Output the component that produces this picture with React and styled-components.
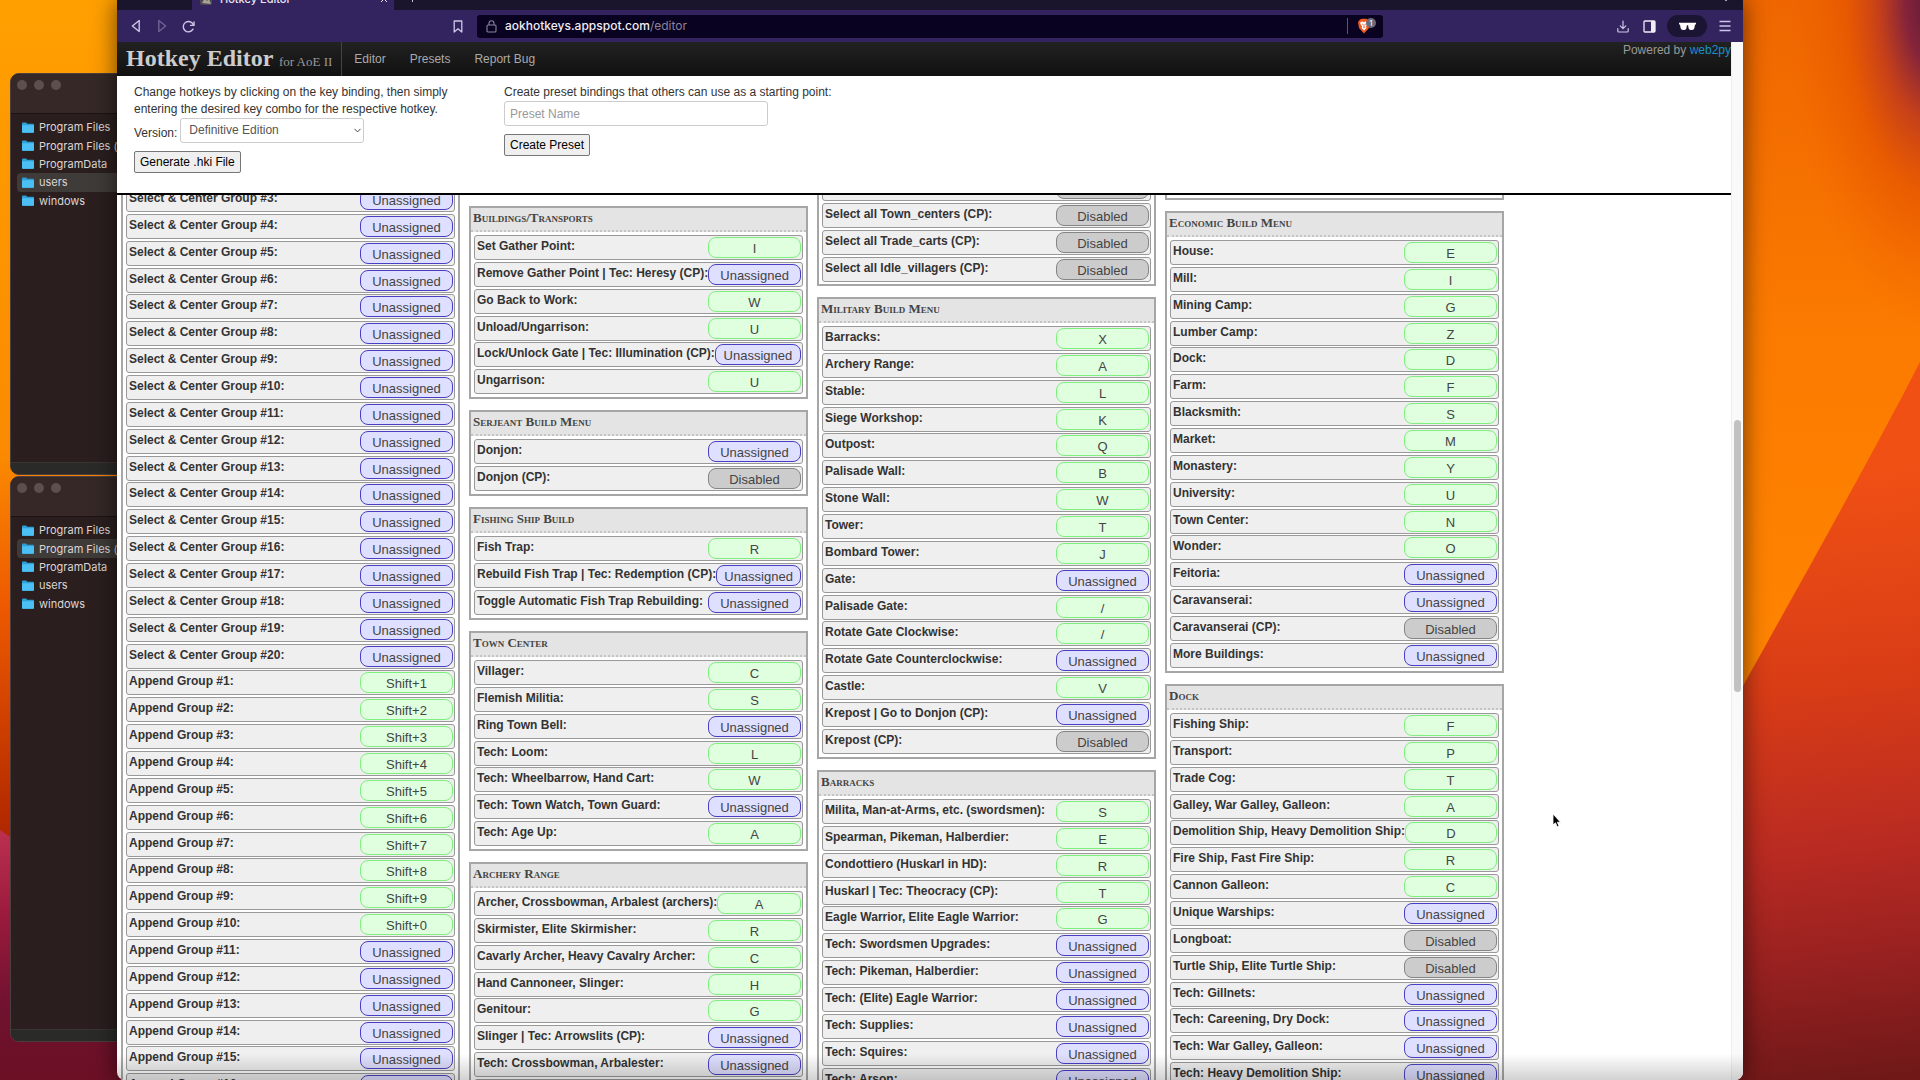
import React from "react";
import styled, { createGlobalStyle } from "styled-components";
import { LuChevronDown } from "react-icons/lu";

const GlobalStyle = createGlobalStyle`
  * {
    box-sizing: border-box;
  }

  body {
    margin: 0;
    font: 12px/17px "Liberation Sans", Arial, sans-serif;
    color: #333;
  }

  button, input, select {
    font: inherit;
  }
`;

const Desktop = styled.div`
  position: relative;
  height: 100vh;
  overflow: hidden;
  background: #f07000;
`;

const WallpaperArt = styled.svg`
  position: absolute;
  inset: 0;
  width: 100%;
  height: 100%;
`;

/* Finder windows */

const Finder = styled.section`
  position: absolute;
  left: 10px;
  top: ${(p) => p.$top}px;
  width: 240px;
  height: ${(p) => p.$height}px;
  display: flex;
  flex-direction: column;
  border: 1px solid #4a3f3e;
  border-radius: 9px;
  background: #2a1f1e;
  overflow: hidden;
`;

const FinderBar = styled.div`
  display: flex;
  gap: 7px;
  height: 40px;
  padding: 6px;
  border-bottom: 1px solid #1c1212;
  background: #352826;
`;

const Light = styled.span`
  width: 10px;
  height: 10px;
  border-radius: 50%;
  background: #5c504f;
`;

const FolderList = styled.ul`
  display: grid;
  grid-template-rows: repeat(5, 1fr);
  height: 92px;
  margin: 4px 0 auto;
  padding: 0 0 0 6px;
  list-style: none;
`;

const FolderItem = styled.li`
  display: flex;
  align-items: center;
  gap: 5px;
  padding-left: 5px;
  border-radius: 4px;
  background: ${(p) => (p.$active ? "#3f3b39" : "none")};
  color: #ddd5d4;
  font: 11px/18px Inter, sans-serif;
  white-space: nowrap;
`;

const FinderFoot = styled.div`
  height: 12px;
  border-top: 1px solid #3a3433;
  background: #2a2a29;
`;

/* Browser chrome */

const Browser = styled.main`
  position: relative;
  display: flex;
  flex-direction: column;
  height: 100vh;
  margin: 0 177px 0 117px;
  border-radius: 0 0 8px 8px;
  background: #fff;
  box-shadow: 0 0 24px rgba(0, 0, 0, 0.6);
  overflow: hidden;

  &::after {
    content: "";
    position: absolute;
    inset: auto 0 0;
    height: 26px;
    background: linear-gradient(transparent, rgba(0, 0, 0, 0.18));
    pointer-events: none;
  }
`;

const TabStrip = styled.div`
  display: flex;
  flex: none;
  align-items: flex-end;
  height: 10px;
  padding: 0 16px 0 75px;
  background: #1a152d;
  overflow: hidden;
`;

const Tab = styled.div`
  display: flex;
  align-items: center;
  gap: 8px;
  width: 202px;
  height: 28px;
  padding: 5px 6px 0 8px;
  background: #33245f;
  color: #e9e6f2;
  font: 500 11px/16px Inter, sans-serif;

  svg:last-child {
    margin-left: auto;
  }
`;

const NewTab = styled.div`
  width: 1px;
  height: 8px;
  margin: 0 auto 8px 18px;
  background: #c9c5d8;
`;

const TabMenu = styled.div`
  width: 2px;
  height: 2px;
  margin-bottom: 9px;
  background: #a9a4bc;
`;

const Toolbar = styled.div`
  display: flex;
  flex: none;
  align-items: center;
  height: 32px;
  padding: 0 5px 0 6px;
  background: #33245f;
`;

const ToolButton = styled.button`
  display: flex;
  flex: none;
  align-items: center;
  justify-content: center;
  width: 26px;
  height: 22px;
  padding: 0;
  border: 0;
  border-radius: 11px;
  background: none;
  color: ${(p) => (p.$dim ? "#6f6493" : "#cdc6e6")};
`;

const BookmarkButton = styled(ToolButton)`
  margin-left: 244px;
`;

const PrivateButton = styled(ToolButton)`
  width: 40px;
  margin: 0 5px;
  background: #1c1433;
  color: #fff;
`;

const AddressBar = styled.div`
  display: flex;
  flex: 0 1 906px;
  align-items: center;
  height: 23px;
  margin: 0 auto 0 6px;
  padding: 0 4px 0 9px;
  border-radius: 3px;
  background: #090220;
  color: #8a839f;
  font: 12px/16px Inter, sans-serif;

  b {
    margin-left: 8px;
    color: #efedf6;
    font-weight: 500;
  }
`;

const Shield = styled.div`
  display: flex;
  margin-left: auto;
  padding-left: 9px;
  border-left: 1px solid #5b5472;
`;

const Viewport = styled.div`
  display: flex;
  flex: 1;
  min-height: 0;
`;

const Page = styled.div`
  display: flex;
  flex: 1;
  flex-direction: column;
  min-width: 0;
`;

const Scrollbar = styled.div`
  width: 12px;
  padding: 378px 2px 0;
  border-left: 1px solid #eeeef0;
  background: #f9f9fa;
`;

const Thumb = styled.div`
  width: 7px;
  height: 272px;
  border-radius: 4px;
  background: #c1c1c1;
`;

/* Site header */

const NavBar = styled.nav`
  display: flex;
  flex: none;
  height: 34px;
  padding-left: 9px;
  background: linear-gradient(#222, #111);
  color: #999;
`;

const Brand = styled.a`
  padding-right: 9px;
  border-right: 1px solid #444;
  color: #ccc;
  font: bold 24px/33px "Liberation Serif", serif;
  text-decoration: none;

  small {
    color: #999;
    font-size: 13px;
    font-weight: normal;
  }
`;

const NavLink = styled.a`
  padding: 0 12px;
  color: #aaa;
  line-height: 34px;
  text-decoration: none;
`;

const Powered = styled.span`
  margin-left: auto;

  a {
    color: #1a8fc9;
    text-decoration: none;
  }
`;

const Settings = styled.header`
  display: flex;
  flex: none;
  gap: 52px;
  height: 119px;
  padding: 8px 17px 0;
  border-bottom: 2px solid #000;
`;

const SettingsColumn = styled.div`
  width: 318px;
  white-space: nowrap;

  p {
    margin: 0;
  }
`;

const VersionRow = styled.div`
  display: flex;
  align-items: center;
  gap: 3px;

  label {
    padding-top: 5px;
  }
`;

const SelectBox = styled.div`
  position: relative;

  svg {
    position: absolute;
    top: 7px;
    right: 1px;
    pointer-events: none;
  }
`;

const Select = styled.select`
  display: block;
  width: 184px;
  height: 25px;
  padding: 0 8px;
  border: 1px solid #ccc;
  border-radius: 3px;
  background: #fff;
  color: #555;
  appearance: none;
`;

const Input = styled.input`
  display: block;
  width: 264px;
  height: 25px;
  padding: 0 5px;
  border: 1px solid #ccc;
  border-radius: 3px;
  color: #555;

  &::placeholder {
    color: #999;
  }
`;

const Button = styled.button`
  height: 22px;
  margin-top: 8px;
  padding: 0 5px;
  border: 1px solid #767676;
  border-radius: 2px;
  background: #efefef;
  color: #000;
`;

/* Hotkey groups */

const Columns = styled.div`
  display: flex;
  flex: 1;
  align-items: flex-start;
  gap: 9px;
  min-height: 0;
  padding-left: 4px;
  overflow: hidden;
`;

const Column = styled.div`
  display: flex;
  flex: 0 0 339px;
  flex-direction: column;
  gap: 11px;
  min-width: 0;
  margin-top: ${(p) => p.$shift}px;
`;

const Group = styled.section`
  min-height: 5px;
  padding-bottom: 1px;
  border: 2px solid #a6a6a6;
  border-top-width: ${(p) => (p.$open ? 0 : 2)}px;
  background: #fff;
`;

const GroupTitle = styled.h2`
  height: 24px;
  margin: 0 0 3px;
  padding-left: 2px;
  border-bottom: 2px dotted #c4c4c4;
  background: #e4e4e4;
  color: #444;
  font: bold small-caps 13px/20px "Liberation Serif", serif;
`;

const Row = styled.div`
  display: flex;
  align-items: center;
  height: 25px;
  margin: 0 3px 2px;
  padding: 0 1px 0 2px;
  border: 1px solid #999;
  border-radius: 3px;
  background: #efefef;

  &:nth-of-type(7n + 4) {
    margin-bottom: 1px;
  }
`;

const RowLabel = styled.label`
  flex: none;
  padding-bottom: 2px;
  font-weight: bold;
  white-space: nowrap;
`;

const tones = {
  bound: { line: "#7df07d", fill: "#dfffdf" },
  Unassigned: { line: "#4a3fc4", fill: "#dfdfff" },
  Disabled: { line: "#858585", fill: "#cccccc" },
};

// gives up a few pixels when the label beside it is long
const KeyButton = styled.button`
  flex: 0 1 93px;
  min-width: 0;
  height: 21px;
  margin-left: auto;
  padding: 1px 0 0;
  border: 1px solid ${(p) => p.$tone.line};
  border-radius: 8px;
  background: ${(p) => p.$tone.fill};
  color: #444;
  font-size: 13px;
`;

const Cursor = styled.svg`
  position: absolute;
  left: 1552px;
  top: 813px;
`;

const folders = ["Program Files", "Program Files (x86)", "ProgramData", "users", "windows"];

const U = "Unassigned";
const D = "Disabled";

const selectRows = Array.from({ length: 18 }, (_, i) => [`Select & Center Group #${i + 3}:`, U]);
const appendRows = Array.from({ length: 16 }, (_, i) => [
  `Append Group #${i + 1}:`,
  i < 10 ? `Shift+${(i + 1) % 10}` : U,
]);

const columns = [
  {
    shift: -8,
    groups: [{ rows: [...selectRows, ...appendRows] }],
  },
  {
    shift: 11,
    groups: [
      {
        title: "Buildings/Transports",
        rows: [
          ["Set Gather Point:", "I"],
          ["Remove Gather Point | Tec: Heresy (CP):", U],
          ["Go Back to Work:", "W"],
          ["Unload/Ungarrison:", "U"],
          ["Lock/Unlock Gate | Tec: Illumination (CP):", U],
          ["Ungarrison:", "U"],
        ],
      },
      {
        title: "Serjeant Build Menu",
        rows: [
          ["Donjon:", U],
          ["Donjon (CP):", D],
        ],
      },
      {
        title: "Fishing Ship Build",
        rows: [
          ["Fish Trap:", "R"],
          ["Rebuild Fish Trap | Tec: Redemption (CP):", U],
          ["Toggle Automatic Fish Trap Rebuilding:", U],
        ],
      },
      {
        title: "Town Center",
        rows: [
          ["Villager:", "C"],
          ["Flemish Militia:", "S"],
          ["Ring Town Bell:", U],
          ["Tech: Loom:", "L"],
          ["Tech: Wheelbarrow, Hand Cart:", "W"],
          ["Tech: Town Watch, Town Guard:", U],
          ["Tech: Age Up:", "A"],
        ],
      },
      {
        title: "Archery Range",
        rows: [
          ["Archer, Crossbowman, Arbalest (archers):", "A"],
          ["Skirmister, Elite Skirmisher:", "R"],
          ["Cavarly Archer, Heavy Cavalry Archer:", "C"],
          ["Hand Cannoneer, Slinger:", "H"],
          ["Genitour:", "G"],
          ["Slinger | Tec: Arrowslits (CP):", U],
          ["Tech: Crossbowman, Arbalester:", U],
          ["", U],
        ],
      },
    ],
  },
  {
    shift: -19,
    groups: [
      {
        rows: [
          ["", D],
          ["Select all Town_centers (CP):", D],
          ["Select all Trade_carts (CP):", D],
          ["Select all Idle_villagers (CP):", D],
        ],
      },
      {
        title: "Military Build Menu",
        rows: [
          ["Barracks:", "X"],
          ["Archery Range:", "A"],
          ["Stable:", "L"],
          ["Siege Workshop:", "K"],
          ["Outpost:", "Q"],
          ["Palisade Wall:", "B"],
          ["Stone Wall:", "W"],
          ["Tower:", "T"],
          ["Bombard Tower:", "J"],
          ["Gate:", U],
          ["Palisade Gate:", "/"],
          ["Rotate Gate Clockwise:", "/"],
          ["Rotate Gate Counterclockwise:", U],
          ["Castle:", "V"],
          ["Krepost | Go to Donjon (CP):", U],
          ["Krepost (CP):", D],
        ],
      },
      {
        title: "Barracks",
        rows: [
          ["Milita, Man-at-Arms, etc. (swordsmen):", "S"],
          ["Spearman, Pikeman, Halberdier:", "E"],
          ["Condottiero (Huskarl in HD):", "R"],
          ["Huskarl | Tec: Theocracy (CP):", "T"],
          ["Eagle Warrior, Elite Eagle Warrior:", "G"],
          ["Tech: Swordsmen Upgrades:", U],
          ["Tech: Pikeman, Halberdier:", U],
          ["Tech: (Elite) Eagle Warrior:", U],
          ["Tech: Supplies:", U],
          ["Tech: Squires:", U],
          ["Tech: Arson:", U],
        ],
      },
    ],
  },
  {
    shift: 0,
    groups: [
      { rows: [] },
      {
        title: "Economic Build Menu",
        rows: [
          ["House:", "E"],
          ["Mill:", "I"],
          ["Mining Camp:", "G"],
          ["Lumber Camp:", "Z"],
          ["Dock:", "D"],
          ["Farm:", "F"],
          ["Blacksmith:", "S"],
          ["Market:", "M"],
          ["Monastery:", "Y"],
          ["University:", "U"],
          ["Town Center:", "N"],
          ["Wonder:", "O"],
          ["Feitoria:", U],
          ["Caravanserai:", U],
          ["Caravanserai (CP):", D],
          ["More Buildings:", U],
        ],
      },
      {
        title: "Dock",
        rows: [
          ["Fishing Ship:", "F"],
          ["Transport:", "P"],
          ["Trade Cog:", "T"],
          ["Galley, War Galley, Galleon:", "A"],
          ["Demolition Ship, Heavy Demolition Ship:", "D"],
          ["Fire Ship, Fast Fire Ship:", "R"],
          ["Cannon Galleon:", "C"],
          ["Unique Warships:", U],
          ["Longboat:", D],
          ["Turtle Ship, Elite Turtle Ship:", D],
          ["Tech: Gillnets:", U],
          ["Tech: Careening, Dry Dock:", U],
          ["Tech: War Galley, Galleon:", U],
          ["Tech: Heavy Demolition Ship:", U],
        ],
      },
    ],
  },
];

const Wallpaper = () => (
  <WallpaperArt viewBox="0 0 1920 1080" preserveAspectRatio="none">
    <defs>
      <linearGradient id="left" x1="0" y1="0" x2="0" y2="1">
        <stop offset="0" stopColor="#ffa000" />
        <stop offset=".42" stopColor="#fb8a00" />
        <stop offset=".56" stopColor="#ee5a00" />
        <stop offset=".8" stopColor="#a82000" />
      </linearGradient>
      <linearGradient id="hill" gradientUnits="userSpaceOnUse" x1="0" y1="830" x2="0" y2="1080">
        <stop offset="0" stopColor="#bc3050" />
        <stop offset=".35" stopColor="#9a1a3c" />
        <stop offset=".7" stopColor="#701230" />
        <stop offset="1" stopColor="#6a1024" />
      </linearGradient>
      <linearGradient id="right" x1="0" y1="0" x2="0" y2="1">
        <stop offset="0" stopColor="#ee6600" />
        <stop offset=".3" stopColor="#fb7a00" />
        <stop offset=".6" stopColor="#ff8400" />
      </linearGradient>
      <linearGradient id="slope" gradientUnits="userSpaceOnUse" x1="1780" y1="480" x2="1850" y2="1080">
        <stop offset="0" stopColor="#f05014" />
        <stop offset=".35" stopColor="#d83c16" />
        <stop offset=".62" stopColor="#b82a22" />
        <stop offset=".82" stopColor="#942020" />
        <stop offset="1" stopColor="#701818" />
      </linearGradient>
      <radialGradient id="corner" gradientUnits="userSpaceOnUse" cx="0" cy="0" r="1" gradientTransform="translate(1935 0) scale(150 330)">
        <stop offset="0" stopColor="#5c1838" />
        <stop offset=".2" stopColor="#84243a" />
        <stop offset=".38" stopColor="#c23c1c" stopOpacity=".9" />
        <stop offset=".6" stopColor="#e65400" stopOpacity=".7" />
        <stop offset="1" stopColor="#ee6400" stopOpacity="0" />
      </radialGradient>
    </defs>
    <rect width="960" height="1080" fill="url(#left)" />
    <path d="M0 830L10 837L60 880H300V1080H0Z" fill="url(#hill)" />
    <rect x="960" width="960" height="1080" fill="url(#right)" />
    <rect x="1700" width="220" height="360" fill="url(#corner)" />
    <path d="M1920 362C1880 440 1830 530 1743 686L1700 760V1080H1920Z" fill="url(#slope)" />
  </WallpaperArt>
);

const FolderIcon = () => (
  <svg width="12" height="11" viewBox="0 0 12 11">
    <path d="M0 1.5Q0 .5 1 .5H4L5.2 1.8H11Q12 1.8 12 2.8V10Q12 10.8 11 10.8H1Q0 10.8 0 10Z" fill="#2f9fd8" />
    <path d="M0 3.2H12V10Q12 10.8 11 10.8H1Q0 10.8 0 10Z" fill="#4cc0f4" />
  </svg>
);

const FinderWindow = ({ top, height, active }) => (
  <Finder $top={top} $height={height}>
    <FinderBar>
      <Light />
      <Light />
      <Light />
    </FinderBar>
    <FolderList>
      {folders.map((name) => (
        <FolderItem key={name} $active={name === active}>
          <FolderIcon />
          {name}
        </FolderItem>
      ))}
    </FolderList>
    <FinderFoot />
  </Finder>
);

const HotkeyRow = ({ id, label, value }) => (
  <Row>
    {label && <RowLabel htmlFor={id}>{label}</RowLabel>}
    <KeyButton id={id} type="button" $tone={tones[value] || tones.bound}>
      {value}
    </KeyButton>
  </Row>
);

const BrowserChrome = () => (
  <>
    <TabStrip>
      <Tab>
        <svg width="12" height="12" viewBox="0 0 12 12">
          <rect width="12" height="12" rx="2" fill="#4c4a4f" />
          <path d="M2 10L5 5L7 8L9 6L11 11Z" fill="#a8a297" />
        </svg>
        Hotkey Editor
        <svg width="8" height="8" viewBox="0 0 8 8" stroke="#e9e6f2">
          <path d="M1 1L7 7M7 1L1 7" />
        </svg>
      </Tab>
      <NewTab />
      <TabMenu />
    </TabStrip>
    <Toolbar>
      <ToolButton aria-label="Back">
        <svg width="10" height="14" viewBox="0 0 10 14" fill="none" stroke="currentColor" strokeWidth="1.4" strokeLinejoin="round">
          <path d="M8.2 1.5V12.5L1.4 7Z" />
        </svg>
      </ToolButton>
      <ToolButton aria-label="Forward" $dim>
        <svg width="10" height="14" viewBox="0 0 10 14" fill="none" stroke="currentColor" strokeWidth="1.4" strokeLinejoin="round">
          <path d="M1.8 1.5V12.5L8.6 7Z" />
        </svg>
      </ToolButton>
      <ToolButton aria-label="Reload">
        <svg width="13" height="13" viewBox="0 0 13 13" fill="none" stroke="currentColor" strokeWidth="1.4" strokeLinecap="round">
          <path d="M11 9.2A5.2 5.2 0 1 1 11.4 5" />
          <path d="M12 2V5.4H8.6" />
        </svg>
      </ToolButton>
      <BookmarkButton aria-label="Bookmark">
        <svg width="10" height="13" viewBox="0 0 10 13" fill="none" stroke="currentColor" strokeWidth="1.3" strokeLinejoin="round">
          <path d="M1.2 1H8.8V12L5 8.8L1.2 12Z" />
        </svg>
      </BookmarkButton>
      <AddressBar>
        <svg width="11" height="13" viewBox="0 0 11 13" fill="none" stroke="#8a839f" strokeWidth="1.1">
          <rect x="1" y="5" width="9" height="7" rx="1" />
          <path d="M3 5V3.2A2.5 2.5 0 0 1 8 3.2V5" />
        </svg>
        <b>aokhotkeys.appspot.com</b>/editor
        <Shield>
          <svg width="22" height="16" viewBox="0 0 22 16">
            <path d="M3 1.5L5 .8H9L11 1.5L13 4L12 10L7 15.5L2 10L1 4Z" fill="#f4581f" />
            <path d="M3.6 4L5.6 3.6L7 4.2L8.4 3.6L10.4 4L10.8 5.6L9 8.6L9.4 10L7 12.4L4.6 10L5 8.6L3.2 5.6Z" fill="#fff" />
            <path d="M5 6L6.2 6.6M9 6L7.8 6.6M7 6.4V9M6 9.6L7 9L8 9.6" stroke="#f4581f" strokeWidth=".8" fill="none" />
            <circle cx="14" cy="5" r="5" fill="#6d6a78" />
            <text x="14" y="8" fill="#fff" fontSize="8" textAnchor="middle" fontFamily="Inter">1</text>
          </svg>
        </Shield>
      </AddressBar>
      <ToolButton aria-label="Downloads">
        <svg width="12" height="13" viewBox="0 0 12 13" fill="none" stroke="currentColor" strokeWidth="1.2" strokeLinecap="round" strokeLinejoin="round">
          <path d="M6 1V8.4M3.2 5.8L6 8.6L8.8 5.8M.8 8.6V11Q.8 12 1.8 12H10.2Q11.2 12 11.2 11V8.6" />
        </svg>
      </ToolButton>
      <ToolButton aria-label="Sidebar">
        <svg width="13" height="13" viewBox="0 0 13 13">
          <rect x="1" y="1" width="11" height="11" rx="1" fill="none" stroke="#f0edf8" strokeWidth="1.3" />
          <rect x="8" y="1" width="4" height="11" fill="#f0edf8" />
        </svg>
      </ToolButton>
      <PrivateButton aria-label="Private window">
        <svg width="17" height="9" viewBox="0 0 17 9" fill="currentColor">
          <path d="M0 .8H17V2.4H16L15.4 6Q15 8 13 8H11.6Q10 8 9.6 6.2L9.1 3.2H7.9L7.4 6.2Q7 8 5.4 8H4Q2 8 1.6 6L1 2.4H0Z" />
        </svg>
      </PrivateButton>
      <ToolButton aria-label="Menu">
        <svg width="12" height="12" viewBox="0 0 12 12" stroke="currentColor" strokeWidth="1.3">
          <path d="M.5 1.5H11.5M.5 6H11.5M.5 10.5H11.5" />
        </svg>
      </ToolButton>
    </Toolbar>
  </>
);

const App = () => {
  return (
    <Desktop>
      <GlobalStyle />
      <Wallpaper />
      <FinderWindow top={73} height={402} active="users" />
      <FinderWindow top={476} height={566} active="Program Files (x86)" />
      <Browser>
        <BrowserChrome />
        <Viewport>
          <Page>
            <NavBar>
              <Brand href="#">
                Hotkey Editor <small>for AoE II</small>
              </Brand>
              <NavLink href="#editor">Editor</NavLink>
              <NavLink href="#presets">Presets</NavLink>
              <NavLink href="#bug">Report Bug</NavLink>
              <Powered>
                Powered by <a href="#web2py">web2py</a>
              </Powered>
            </NavBar>
            <Settings>
              <SettingsColumn>
                <p>
                  Change hotkeys by clicking on the key binding, then simply
                  <br />
                  entering the desired key combo for the respective hotkey.
                </p>
                <VersionRow>
                  <label htmlFor="version">Version:</label>
                  <SelectBox>
                    <Select id="version">
                      <option>Definitive Edition</option>
                    </Select>
                    <LuChevronDown size={11} />
                  </SelectBox>
                </VersionRow>
                <Button type="button">Generate .hki File</Button>
              </SettingsColumn>
              <SettingsColumn>
                <label htmlFor="preset">Create preset bindings that others can use as a starting point:</label>
                <Input id="preset" placeholder="Preset Name" />
                <Button type="button">Create Preset</Button>
              </SettingsColumn>
            </Settings>
            <Columns>
              {columns.map((column, c) => (
                <Column key={c} $shift={column.shift}>
                  {column.groups.map((group, g) => (
                    <Group key={g} $open={!group.title}>
                      {group.title && <GroupTitle>{group.title}</GroupTitle>}
                      {group.rows.map(([label, value], r) => (
                        <HotkeyRow key={r} id={`key-${c}-${g}-${r}`} label={label} value={value} />
                      ))}
                    </Group>
                  ))}
                </Column>
              ))}
            </Columns>
          </Page>
          <Scrollbar>
            <Thumb />
          </Scrollbar>
        </Viewport>
      </Browser>
      <Cursor width="9" height="15" viewBox="0 0 9 15">
        <path d="M1 1V12L3.5 9.8L5.2 13.8L7 13L5.3 9.2H8.5Z" fill="#000" stroke="#fff" strokeWidth=".8" />
      </Cursor>
    </Desktop>
  );
};

export default App;
